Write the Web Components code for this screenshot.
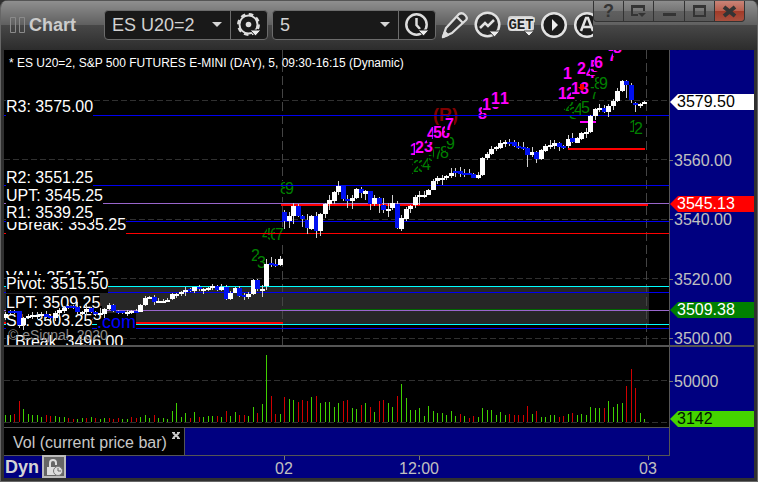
<!DOCTYPE html>
<html lang="en">
<head>
<meta charset="utf-8">
<title>Chart</title>
<style>
html,body{margin:0;height:100%;background:#303030}
body{font-family:"Liberation Sans",Arial,sans-serif}
</style>
</head>
<body>
<chart-window></chart-window>

<script>
const define = (name, html, setup) => {
  const t = document.createElement('template');
  t.innerHTML = html;
  customElements.define(name, class extends HTMLElement {
    constructor() {
      super();
      this.attachShadow({mode: 'open'}).append(t.content.cloneNode(true));
    }
    connectedCallback() { if (setup) setup(this, this.shadowRoot); }
  });
};

/* ---------- toolbar parts ---------- */
define('tool-button', `
<style>
:host{display:block;flex:none}
button{display:flex;align-items:center;justify-content:center;width:100%;height:100%;margin:0;padding:0;border:0;background:none;color:inherit}
</style>
<button type="button"><slot></slot></button>`, (el, root) => {
  root.querySelector('button').setAttribute('aria-label', el.getAttribute('label'));
});

define('picker-box', `
<style>
:host{display:flex;flex:none;height:28px;border:1px solid #6c6c6c;border-radius:4px;background:#191919;color:#d2d2d2;overflow:hidden}
.pick{position:relative;width:125px;border-right:1px solid #6c6c6c}
select{appearance:none;display:block;width:100%;height:28px;margin:0;padding:0 20px 0 7px;border:0;background:none;color:inherit;font:18px "Liberation Sans",Arial,sans-serif}
.arrow{position:absolute;right:8px;top:11px;width:10px;height:5px;pointer-events:none}
tool-button{width:36px}
</style>
<div class="pick"><select></select>
<svg class="arrow" viewBox="0 0 10 5"><path d="M0 0H10L5 5Z" fill="#d6d6d6"/></svg></div>
<tool-button><slot></slot></tool-button>`, (el, root) => {
  const s = root.querySelector('select');
  s.setAttribute('aria-label', el.getAttribute('label'));
  s.add(new Option(el.getAttribute('value')));
  root.querySelector('tool-button').shadowRoot.querySelector('button').setAttribute('aria-label', el.getAttribute('action'));
});

define('window-controls', `
<style>
:host{display:flex;height:21px;width:152px;border:1px solid #333;border-top:0;border-radius:0 0 4px 4px;box-sizing:border-box;overflow:hidden;background:#333;gap:1px}
tool-button{flex:1;background:linear-gradient(#8d8d8d,#767676 48%,#606060 50%,#585858)}
tool-button.close{background:linear-gradient(#c98478,#b9604f 48%,#a23a27 50%,#a8503f)}
.q{font:bold 18px/18px "Liberation Sans",Arial,sans-serif;color:#343434}
svg{display:block;fill:none;stroke:#343434;stroke-width:2}
</style>
<tool-button label="Help"><span class="q">?</span></tool-button>
<tool-button label="Dock"><svg width="17" height="14"><path d="M8 11H2V2H14V7"/><path d="M1 2.500H15" stroke-width="3"/><path d="M8 9H16L12 13Z" fill="#343434" stroke="none"/></svg></tool-button>
<tool-button label="Minimize"><svg width="15" height="14"><path d="M1 10.500H14" stroke-width="3"/></svg></tool-button>
<tool-button label="Maximize"><svg width="15" height="14"><path d="M2 2H13V12H2Z"/><path d="M1 2.500H14" stroke-width="3"/></svg></tool-button>
<tool-button class="close" label="Close"><svg width="15" height="14"><path d="M2 3L13 12M13 3L2 12" stroke-width="4"/></svg></tool-button>`);

define('title-bar', `
<style>
:host{position:relative;display:block;height:49px;border-top:1px solid #555;background:linear-gradient(#8f8f8f,#606060 48%,#474747 50%,#2c2c2c)}
.row{display:flex;align-items:center;height:48px;padding-left:9px;overflow:hidden;color:#ddd}
.grip{flex:none;margin-right:3px}
h1{margin:0;width:75px;flex:none;font:bold 18px/22px "Liberation Sans",Arial,sans-serif;color:#ccc}
picker-box{margin-right:4px}
.last{margin-right:2px}
tool-button{width:33px;height:30px}
.ctl{position:absolute;right:0;top:0;width:164px;height:49px;background:linear-gradient(#8f8f8f,#606060 48%,#474747 50%,#2c2c2c);border-top-right-radius:8px}
svg{display:block;flex:none}
</style>
<div class="row">
<svg class="grip" width="16" height="16" fill="none" stroke="#8a8a8a"><path d="M.5 .5H5.500V15.500H.5ZM9.500 .5H14.500V15.500H9.500Z"/></svg>
<h1>Chart</h1>
<picker-box label="Symbol" value="ES U20=2" action="Symbol settings">
<svg width="26" height="26" viewBox="0 0 26 26" fill="none" stroke="#ddd"><circle cx="12.500" cy="12.500" r="9" stroke-width="2"/><circle cx="12.500" cy="12.500" r="10.200" stroke-width="2.500" stroke-dasharray="4.500 3.510"/><circle cx="12.500" cy="12.500" r="2.800" fill="#ddd" stroke="none"/><path d="M14 18H25L19.500 24Z" fill="#eee" stroke="#191919"/></svg>
</picker-box>
<picker-box class="last" label="Interval" value="5" action="Time settings">
<svg width="26" height="26" viewBox="0 0 26 26" fill="none" stroke="#ddd"><circle cx="12.500" cy="12.500" r="10.200" stroke-width="2.500"/><path d="M12.500 6V13L16 17" stroke-width="2.500"/><path d="M14 18H25L19.500 24Z" fill="#eee" stroke="#191919"/></svg>
</picker-box>
<tool-button label="Draw"><svg width="28" height="28" viewBox="0 0 28 28" fill="#333" stroke="#ddd" stroke-width="2.300" stroke-linejoin="round"><path d="M2 26L5 17L18 3Q21 1 24 4Q27 7 25 9L11 22Z"/><path d="M16 6L22 12"/><path d="M2 26L4 21L7 24Z" fill="#ddd"/></svg></tool-button>
<tool-button label="Studies"><svg width="28" height="28" viewBox="0 0 28 28" fill="none" stroke="#e2e2e2"><circle cx="13.500" cy="13.500" r="11.800" fill="#2b2b2b" stroke-width="2.500"/><path d="M6 17L11 12L14 15L20 9" stroke-width="2.500"/><path d="M15 20H26L20.500 26Z" fill="#eee" stroke="#333"/></svg></tool-button>
<tool-button label="GET"><svg width="28" height="26" viewBox="0 0 28 26"><rect x="1" y="4" width="26" height="15" rx="3" fill="#d0d0d0"/><text x="14" y="17" text-anchor="middle" font-family="Liberation Mono" font-weight="bold" font-size="14" fill="#222" stroke="#e4e4e4" stroke-width="3" paint-order="stroke">GET</text><path d="M17 19H27L22 24Z" fill="#eee" stroke="#444"/></svg></tool-button>
<tool-button label="Play"><svg width="28" height="28" viewBox="0 0 28 28"><circle cx="14" cy="14" r="11.800" fill="#1c1c1c" stroke="#e2e2e2" stroke-width="2.500"/><path d="M12 8V20L18 14Z" fill="#eee"/></svg></tool-button>
<tool-button label="Alerts"><svg width="28" height="28" viewBox="0 0 28 28" fill="none" stroke="#e2e2e2" stroke-width="2.500"><circle cx="14" cy="14" r="11.800" fill="#1c1c1c"/><path d="M8 20L13 7H15L20 20M10 16H18"/></svg></tool-button>
</div>
<div class="ctl"></div>
<slot></slot>`);

/* ---------- price pane ---------- */
const CW = 665, PH = 295;
const X = i => 1.5 + 4.5 * i;
/* colour, body top, body bottom, high, low, in thirds of a pixel */
const bars = [];
const addBars = (origin, text) => text.trim().split(/\s+/).forEach(s => {
  const [c, ...n] = [s[0], ...s.slice(1).split(',').map(Number)];
  const [t, b, h = t - 2, l = b + 3] = n;
  bars.push([c, ...[h, t, b, l].map(v => Math.round(v / 3 + origin - 50))]);
});
addBars(235, `w237,250,232,255 b228,234 b228,234 b228,270,228,280 w249,270,246,285 w243,249,238,252 w240,246,232,252 w240,244,231,252 w237,244,231,250 b237,246,228,250
b243,250,240,255 w234,249,228,258 w226,235,220,243 w219,228,212,234 b213,219 b213,219 b216,230,202,243 w231,236 w222,230,207,240 b219,231
b231,236,228,243 w234,238,220,243 w222,236,219,249 w210,222,205,225 b210,228,206,231 b228,233 b229,234 w231,237,225,243 w228,234,225,238 b229,233,222,234
w210,230,207,231 w189,210,183,213 w186,189,183,192 b186,200,180,210 w198,203,189,204 w198,202,192,204 w195,200,190,202 w178,192,174,194 w177,182,174,190 w171,178,168,182
w165,171,155,183 b163,168,159,171`);
addBars(170, `w352,362,350,368 b350,358,345,363 w357,362,354,372 w353,358,350,363 w348,353,342,360 b348,360,346,363 w350,360,342,363 b350,388,345,389
w369,387,363,390 w353,368,350,369 b353,378,348,381 b376,381,370,390 w372,381,366,387 w330,372,326,375 b329,358,326,363 w357,360,345,381 w282,348,267,360
b279,285,262,290 b282,288,267,290 w267,285,258,288 b126,152,120,177 w138,153,126,174 w108,138,98,162 b108,138,102,141 b138,147,135,171 b150,174,132,192
w138,177,135,180 b138,183,126,204 w132,183,129,198 w102,132,99,144 w90,102,75,120 w66,93,63,102 w48,66,33,75 b46,87,46,93 b87,93,75,114 w84,93,75,117 w57,84,54,87
b57,70,51,84 w63,72,60,90`);
addBars(90, `b303,342,303,360 w324,342,315,348 b324,342,321,369 b345,360,324,369 w357,362,339,381 w339,354,315,360 b342,414,333,418 w384,416,375,423
w357,387,351,393 w348,357,345,369 w321,345,315,354 w315,321,303,345 w315,320,303,324 w300,315,297,316 w273,300,267,301 w264,273,258,282 w264,270,255,285
w258,264,255,270 w249,257,234,264 b243,249,234,261 b243,252,231,261 b249,254,237,262 b249,254,237,256 b252,263,249,265 w255,264,246,267 w204,255,201,258
w192,204,186,210 w177,192,168,195 w172,178,168,183`);
addBars(50, `w280,294,270,296 w275,281,270,290 b276,281,267,288 b275,288,270,290 b288,293,276,298 b291,296,276,300 b294,315,291,350 w306,315,290,321 b306,326,303,339
w300,327,297,330 w288,303,282,306 w284,289,270,296 w279,287,270,297 b279,290,276,302 b287,293,286,296 w267,288,255,294 b263,276,249,278 w264,279,260,280 w249,267,246,270
w246,251,234,264 w198,246,195,249 w177,198,174,210 w174,178,162,185 b174,186,165,188 w168,186,162,201 w153,168,147,180 w123,153,114,156 w93,123,91,125 b93,105,90,144
b105,150,99,159 b159,165,156,186 w162,168,159,174 w156,162,153,163`);

const H = (y, c, x1 = 0, x2 = CW, h = 1) => `<rect x="${x1}" y="${y}" width="${x2 - x1}" height="${h}" fill="${c}"/>`;
const dashH = y => `<path d="M0 ${y + .5}H${CW}" stroke="#303030" stroke-dasharray="6 3"/>`;
const place = (el, x, y, h = PH) => { el.style.left = x / CW * 100 + '%'; el.style.top = y / h * 100 + '%'; };

/* wave counts: class, text, x, baseline */
const marks = [
 ['g','8',276,146],['g','9',281,146],['g','2',247,213],['g','3',253,220],['g','4',258,192],['g','5',263,192],['g','6',266,192],['g','7',271,192],
 ['r','(R)',429,71],
 ['g','1',407,126],['g','2',409,124],['g','3',414,124],['g','4',418,122],['g','5',424,113],['g','6',428,111],['g','7',430,111],['g','8',436,110],['g','9',442,101],
 ['m','1',406,107],['m','3',420,104],['m','2',411,105],['m','4',423,91],['m','6',437,90],['m','5',429,90],['m','7',441,82],
 ['m','8',474,71],['m','0',487,61],['m','1',478,62],['m','1',487,56],['m','1',496,56],
 ['g','1',559,62],['g','2',561,63],['g','3',565,71],['g','4',570,67],['g','5',577,65],['g','7',586,51],['g','8',590,41],['g','9',595,41],
 ['m','1',554,51],['m','2',562,51],['m','1',567,46],['m','3',576,46],['m','1',559,31],['m','4',582,30],['m','2',573,26],['m','5',586,24],['m','6',590,20],['m','7',604,13],['m','8',609,5],
 ['g','1',625,84],['g','2',630,86]
];
const levels = [
 ['UBreak: 3535.25',181],['R1: 3539.25',169],['UPT: 3545.25',152],['R2: 3551.25',134],['R3: 3575.00',63],
 ['VAH: 3517.25',234],['VAL: 3505.25',271],['Pivot: 3515.50',240],['LPT: 3509.25',259],['LBreak: 3496.00',298],['S1: 3503.25',277]
];

define('price-pane', `
<style>
:host{display:block;position:relative;background:#000;overflow:hidden;min-height:0}
svg{position:absolute;inset:0;width:100%;height:100%}
.m,.g,.r,.level,.site{position:absolute;margin-top:-15px;font-size:16px;line-height:18px;background:#000;white-space:nowrap}
.m{color:#f0f;font-weight:bold;line-height:16px}
.g{color:#008000;line-height:16px}
.r{color:#800000;font-weight:bold;font-size:18px}
.level{color:#fff}
.site{color:#00f;font-size:18px}
.copy{position:absolute;margin-top:-13px;font-size:14px;line-height:16px;color:#8c8c8c;white-space:nowrap}
.head{position:absolute;left:5px;top:5px;margin:0;font-size:12px;line-height:16px;font-weight:normal;color:#fff;white-space:nowrap}
</style>
<svg class="grid" viewBox="0 0 665 295" preserveAspectRatio="none"></svg>
<div class="marks"></div>
<svg class="lines" viewBox="0 0 665 295" preserveAspectRatio="none"></svg>
<div class="levels"></div>
<svg class="bars" viewBox="0 0 665 295" preserveAspectRatio="none"></svg>
<h2 class="head">* ES U20=2, S&amp;P 500 FUTURES E-MINI (DAY), 5, 09:30-16:15 (Dynamic)</h2>`, (el, root) => {
  const q = s => root.querySelector(s);
  q('.grid').innerHTML = H(237, '#262626', 0, 645, 38) + [50,109,169,228,288].map(dashH).join('') +
    [278,642].map(x => `<path d="M${x + .5} 0V295" stroke="#444" stroke-dasharray="9 4"/>`).join('');
  const span = (box, cls, text, x, y) => {
    const s = document.createElement('span');
    s.className = cls; s.textContent = text; place(s, x, y); q(box).append(s);
  };
  marks.forEach(m => span('.marks', ...m));
  q('.lines').innerHTML = H(65,'#0000f0') + H(135,'#0000f0') + H(171,'#0000f0') + H(183,'#f00') +
    H(154,'#f00',277,644,2) + H(153,'#9966cc') + H(236,'#0ff') + H(242,'#0000f0') +
    H(259,'#006400',277,644) + H(260,'#9966cc') + H(272,'#f00',0,279,2) + H(274,'#0ff') + H(278,'#0000f0') +
    H(71,'#f0f',576,592,2) + H(98,'#f00',564,641,2) + '<path d="M574 37h2v-3h4v3h2l-4 4z" fill="#f00"/>';
  span('.levels', 'site', '.com', 93, 278);
  levels.forEach(([t, y]) => span('.levels', 'level', t, 2, y));
  span('.levels', 'copy', '© eSignal, 2020', 4, 290);
  q('.bars').innerHTML = bars.map(([c, h, t, b, l], i) => {
    const x = Math.floor(X(i));
    return H(h, '#d0d0d0', x, x + 1, Math.max(1, l - h)) +
      H(t, c === 'w' ? '#fff' : '#0010f0', x - 2, x + 3, Math.max(2, b - t));
  }).join('');
});

/* ---------- volume pane: bar tops in thirds of a pixel, minus for down bars ---------- */
const vol = `210 210 -207 -168 192 207 210 210 216 -210 -213 213 216 216 -219 -222 222 219 -219 216 -219 222 219 -219 -222 -219 222 222 -216 -219
216 210 219 -210 219 219 222 198 174 216 204 -219 201 -216 216 213 213 -213 216 -198 213 201 -210 -210 213 186 -204 177 30 -153 -207 207 -156 162
165 -171 -165 -168 156 -153 174 171 171 186 174 -168 -165 189 192 -180 174 -186 201 -168 -165 174 186 -153 117 159 195 195 189 213 183 198 204 204
210 198 213 -207 213 -219 -213 216 189 195 195 210 201 210 -207 -210 -210 -210 -183 207 -198 216 216 210 210 -216 -213 207 -204 210 207 210 186
189 189 -189 168 186 177 174 -123 -72 -129 204 222`.split(/\s+/).map(Number);
define('volume-pane', `
<style>:host{display:block;position:relative;background:#000;min-height:0}svg{position:absolute;inset:0;width:100%;height:100%}</style>
<svg viewBox="0 0 665 80" preserveAspectRatio="none"></svg>`, (el, root) => {
  root.querySelector('svg').innerHTML = dashH(33) + dashH(75) + vol.map((v, i) => {
    const top = Math.abs(v) / 3 - 2, x = Math.floor(X(i));
    return `<rect x="${x}" y="${top}" width="1" height="${75 - top}" fill="${v < 0 ? '#d00000' : '#3fd000'}"/>`;
  }).join('');
});

/* ---------- value axis ---------- */
define('value-axis', `
<style>
:host{display:block;position:relative;background:#000080;min-height:0;color:#c0c0c0;font-size:16px;line-height:18px}
span{position:absolute;left:4px;margin-top:-8px}
i{position:absolute;left:-1px;width:4px;height:1px;background:#777}
.tag{left:0;right:0;height:16px;line-height:16px;padding-left:7px;clip-path:polygon(0 50%,8px 0,100% 0,100% 100%,8px 100%)}
</style>`, (el, root) => {
  const h = +el.getAttribute('span');
  const add = (text, y, bg, fg) => {
    const s = document.createElement('span');
    s.textContent = text; s.style.top = y / h * 100 + '%';
    if (bg) { s.className = 'tag'; s.style.background = bg; s.style.color = fg; }
    else { const t = document.createElement('i'); t.style.top = y / h * 100 + '%'; root.append(t); }
    root.append(s);
  };
  el.getAttribute('ticks').split(';').forEach(t => { const [a, y] = t.split('@'); add(a, +y); });
  el.getAttribute('tags').split(';').forEach(t => { const [a, y, bg, fg] = t.split('@'); add(a, +y, bg, fg); });
});

/* ---------- study tab and time axis ---------- */
define('study-tab', `
<style>
:host{display:flex;background:#000080}
.tab{display:flex;align-items:flex-start;background:#000;border-right:1px solid #555;width:180px;color:#c8c8c8;font-size:16px;line-height:18px}
.name{padding:6px 0 0 9px;flex:1;white-space:nowrap}
tool-button{width:11px;height:9px;margin:3px 3px 0 0}
</style>
<div class="tab"><span class="name">Vol (current price bar)</span>
<tool-button label="Close study"><svg width="10" height="8" style="display:block" fill="none" stroke="#ccc"><path d="M2 1L8 6M8 1L2 6" stroke-width="2"/><path d="M1 .5H4M6 .5H9M1 6.500H4M6 6.500H9"/></svg></tool-button></div>`);

define('time-axis', `
<style>
:host{display:flex;position:relative;background:#000080;color:#c0c0c0;font-size:16px;line-height:18px}
b{font-size:18px;line-height:22px;color:#d4d4d4;padding-left:1px;width:38px;box-sizing:border-box}
tool-button{width:20px;height:19px;border:2px solid #bbb;background:#666;margin-top:-1px}
span{position:absolute;top:4px;transform:translateX(-50%)}
i{position:absolute;top:0;width:1px;height:4px;background:#777}
</style>
<b>Dyn</b><tool-button label="Lock time range"><svg width="18" height="18" style="display:block"><path d="M5 9V5Q5 2 8 2Q11 2 11 5V7" fill="none" stroke="#ddd" stroke-width="2"/><path d="M2 9H11V17H2Z" fill="#ddd"/><circle cx="13" cy="13" r="4.500" fill="#ddd" stroke="#777"/><path d="M13 10V13H16" fill="none" stroke="#666"/></svg></tool-button>`, (el, root) => {
  [['02',280],['12:00',415],['03',644]].forEach(([t, x]) => {
    const s = document.createElement('span'), k = document.createElement('i');
    s.textContent = t;
    s.style.left = k.style.left = `calc((100% - 85px) * ${x / CW})`;
    root.append(k, s);
  });
});

define('chart-window', `
<style>
:host{display:flex;flex-direction:column;height:100vh;min-height:300px;box-sizing:border-box;background:#303030;border-left:1px solid #666;border-right:1px solid #666;border-bottom:1px solid #666;border-radius:8px 8px 0 0;overflow:hidden}
window-controls{position:absolute;right:12px;top:0}
main{flex:1;min-height:0;margin:0 3px 3px;display:grid;grid-template-columns:1fr 1px 84px;grid-template-rows:295fr 2px 80fr 1px 27px 1px 22px;background:#000080}
.sep{background:#555}
.v{background:#555;grid-column:2;grid-row:1/6}
.s1{grid-column:1/4;grid-row:2}.s2{grid-column:1/3;grid-row:4}.s3{grid-column:1/3;grid-row:6}
price-pane{grid-column:1;grid-row:1}volume-pane{grid-column:1;grid-row:3}
.pa{grid-column:3;grid-row:1}.va{grid-column:3;grid-row:3}
study-tab{grid-column:1;grid-row:5}time-axis{grid-column:1/4;grid-row:7}
</style>
<title-bar><window-controls></window-controls></title-bar>
<main>
<price-pane></price-pane>
<div class="v"></div><div class="sep s1"></div><div class="sep s2"></div><div class="sep s3"></div>
<value-axis class="pa" span="295" ticks="3560.00@110;3540.00@169;3520.00@229;3500.00@288" tags="3579.50@52@#fff@#000;3545.13@154@#f00@#fff;3509.38@260@#008000@#fff"></value-axis>
<volume-pane></volume-pane>
<value-axis class="va" span="80" ticks="50000@34" tags="3142@72@#44d400@#001400"></value-axis>
<study-tab></study-tab>
<time-axis></time-axis>
</main>`);
</script>
</body>
</html>
